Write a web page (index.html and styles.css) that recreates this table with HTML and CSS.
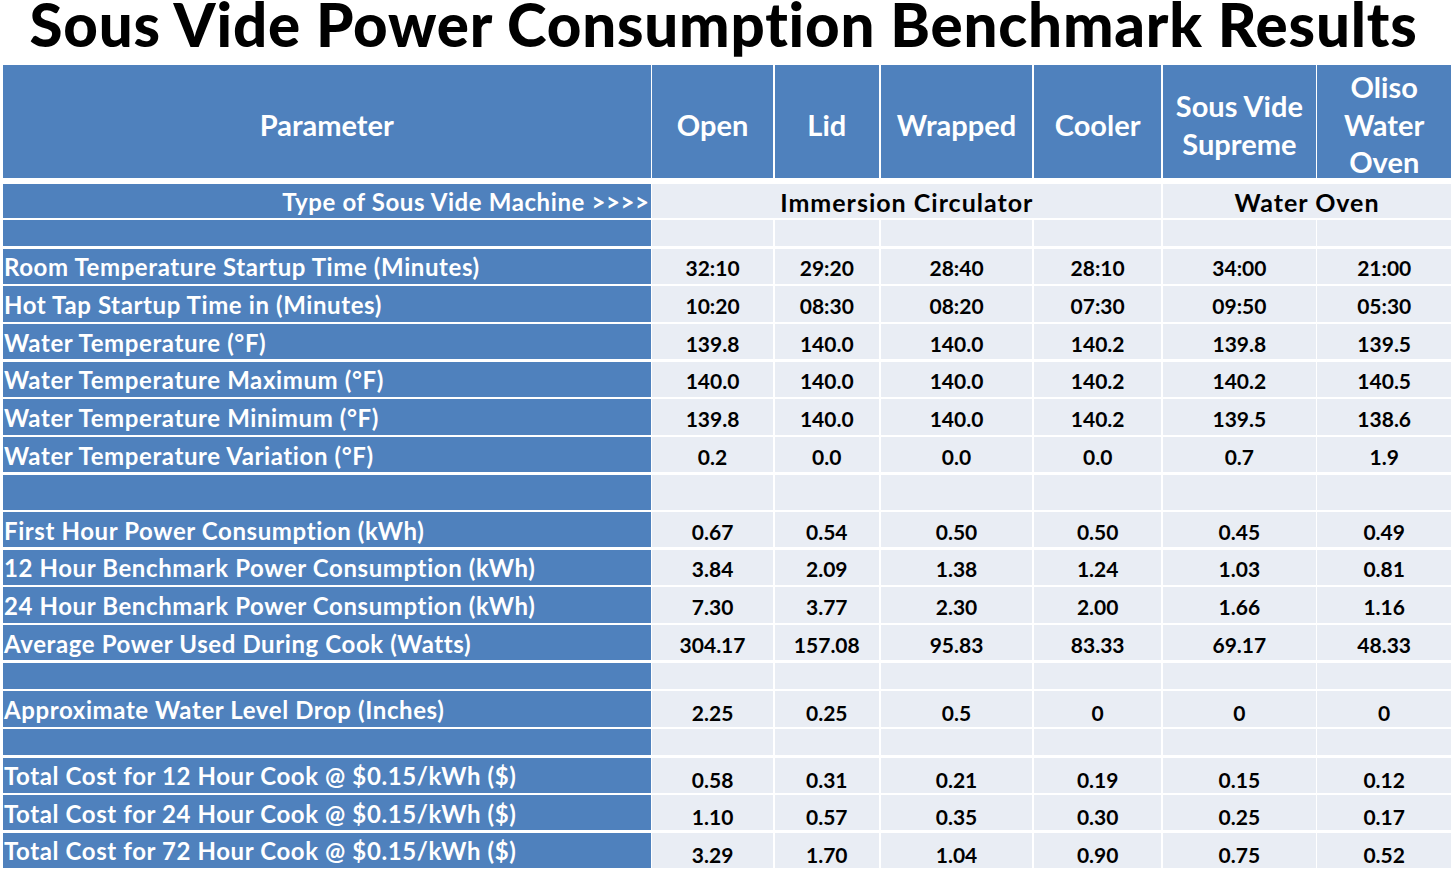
FILE: index.html
```html
<!DOCTYPE html>
<html lang="en">
<head>
<meta charset="utf-8">
<title>Sous Vide Power Consumption Benchmark Results</title>
<link rel="stylesheet" href="styles.css">
</head>
<body>
<div class="page">
  <h1 class="title">Sous Vide Power Consumption Benchmark Results</h1>
  <div class="sheet">
    <div class="grid head">
      <div class="h">Parameter</div>
      <div class="h">Open</div>
      <div class="h">Lid</div>
      <div class="h">Wrapped</div>
      <div class="h">Cooler</div>
      <div class="h">Sous Vide<br>Supreme</div>
      <div class="h">Oliso<br>Water<br>Oven</div>
    </div>
    <div class="grid body">
      <div class="lab type">Type of Sous Vide Machine &gt;&gt;&gt;&gt;</div>
      <div class="d group span4">Immersion Circulator</div>
      <div class="d group span2">Water Oven</div>

      <div class="lab"></div><div class="d"></div><div class="d"></div><div class="d"></div><div class="d"></div><div class="d"></div><div class="d"></div>

      <div class="lab">Room Temperature Startup Time (Minutes)</div><div class="d">32:10</div><div class="d">29:20</div><div class="d">28:40</div><div class="d">28:10</div><div class="d">34:00</div><div class="d">21:00</div>
      <div class="lab">Hot Tap Startup Time in (Minutes)</div><div class="d">10:20</div><div class="d">08:30</div><div class="d">08:20</div><div class="d">07:30</div><div class="d">09:50</div><div class="d">05:30</div>
      <div class="lab">Water Temperature (°F)</div><div class="d">139.8</div><div class="d">140.0</div><div class="d">140.0</div><div class="d">140.2</div><div class="d">139.8</div><div class="d">139.5</div>
      <div class="lab">Water Temperature Maximum (°F)</div><div class="d">140.0</div><div class="d">140.0</div><div class="d">140.0</div><div class="d">140.2</div><div class="d">140.2</div><div class="d">140.5</div>
      <div class="lab">Water Temperature Minimum (°F)</div><div class="d">139.8</div><div class="d">140.0</div><div class="d">140.0</div><div class="d">140.2</div><div class="d">139.5</div><div class="d">138.6</div>
      <div class="lab">Water Temperature Variation (°F)</div><div class="d">0.2</div><div class="d">0.0</div><div class="d">0.0</div><div class="d">0.0</div><div class="d">0.7</div><div class="d">1.9</div>

      <div class="lab"></div><div class="d"></div><div class="d"></div><div class="d"></div><div class="d"></div><div class="d"></div><div class="d"></div>

      <div class="lab">First Hour Power Consumption (kWh)</div><div class="d">0.67</div><div class="d">0.54</div><div class="d">0.50</div><div class="d">0.50</div><div class="d">0.45</div><div class="d">0.49</div>
      <div class="lab">12 Hour Benchmark Power Consumption (kWh)</div><div class="d">3.84</div><div class="d">2.09</div><div class="d">1.38</div><div class="d">1.24</div><div class="d">1.03</div><div class="d">0.81</div>
      <div class="lab">24 Hour Benchmark Power Consumption (kWh)</div><div class="d">7.30</div><div class="d">3.77</div><div class="d">2.30</div><div class="d">2.00</div><div class="d">1.66</div><div class="d">1.16</div>
      <div class="lab">Average Power Used During Cook (Watts)</div><div class="d">304.17</div><div class="d">157.08</div><div class="d">95.83</div><div class="d">83.33</div><div class="d">69.17</div><div class="d">48.33</div>

      <div class="lab"></div><div class="d"></div><div class="d"></div><div class="d"></div><div class="d"></div><div class="d"></div><div class="d"></div>

      <div class="lab">Approximate Water Level Drop (Inches)</div><div class="d low">2.25</div><div class="d low">0.25</div><div class="d low">0.5</div><div class="d low">0</div><div class="d low">0</div><div class="d low">0</div>

      <div class="lab"></div><div class="d"></div><div class="d"></div><div class="d"></div><div class="d"></div><div class="d"></div><div class="d"></div>

      <div class="lab">Total Cost for 12 Hour Cook @ $0.15/kWh ($)</div><div class="d low">0.58</div><div class="d low">0.31</div><div class="d low">0.21</div><div class="d low">0.19</div><div class="d low">0.15</div><div class="d low">0.12</div>
      <div class="lab">Total Cost for 24 Hour Cook @ $0.15/kWh ($)</div><div class="d low">1.10</div><div class="d low">0.57</div><div class="d low">0.35</div><div class="d low">0.30</div><div class="d low">0.25</div><div class="d low">0.17</div>
      <div class="lab">Total Cost for 72 Hour Cook @ $0.15/kWh ($)</div><div class="d low">3.29</div><div class="d low">1.70</div><div class="d low">1.04</div><div class="d low">0.90</div><div class="d low">0.75</div><div class="d low">0.52</div>
    </div>
  </div>
</div>
</body>
</html>
```

FILE: styles.css
```css
html, body {
  margin: 0;
  padding: 0;
  background: #ffffff;
}

body {
  font-family: Lato, "Liberation Sans", sans-serif;
  font-weight: 700;
  color: #000000;
}

.page {
  width: 1453px;
  height: 870px;
  overflow: hidden;
}

.title {
  margin: 0 0 17px 0;
  height: 48px;
  line-height: 48px;
  font-size: 60px;
  font-weight: 900;
  letter-spacing: 0.8px;
  text-align: center;
  padding-right: 6px;
  white-space: nowrap;
}

.sheet {
  margin-left: 3px;
  width: 1448px;
  display: flex;
  flex-direction: column;
  gap: 6px;
}

.grid {
  display: grid;
  grid-template-columns: 647.5px 120.5px 104.4px 151.5px 127.2px 152.6px 133.5px;
  column-gap: 1.8px;
}

.head {
  grid-template-rows: 113px;
}

.body {
  row-gap: 2.4px;
  grid-template-rows:
    34px 26px
    35.24px 35.24px 35.24px 35.24px 35.24px 35.24px
    35.24px
    35.24px 35.24px 35.24px 35.24px
    26px 35.7px 26px
    35.24px 35.24px 35.24px;
}

.h {
  background: #4f81bd;
  color: #ffffff;
  font-size: 29px;
  line-height: 37.5px;
  display: flex;
  align-items: center;
  justify-content: center;
  text-align: center;
  padding-top: 6px;
}

.lab {
  background: #4f81bd;
  color: #ffffff;
  font-size: 24px;
  letter-spacing: 0.6px;
  display: flex;
  align-items: center;
  padding-left: 1px;
  padding-top: 1px;
  white-space: nowrap;
  overflow: hidden;
}

.lab.type {
  justify-content: flex-end;
  padding-right: 1px;
  padding-left: 0;
}

.d {
  background: #e9edf4;
  color: #000000;
  font-size: 21px;
  display: flex;
  align-items: center;
  justify-content: center;
  padding-top: 3px;
  white-space: nowrap;
}

.d.low {
  padding-top: 8px;
}

.d.group {
  font-size: 25px;
  letter-spacing: 1px;
  padding-top: 2px;
}

.span4 {
  grid-column: span 4;
}

.span2 {
  grid-column: span 2;
}
```
